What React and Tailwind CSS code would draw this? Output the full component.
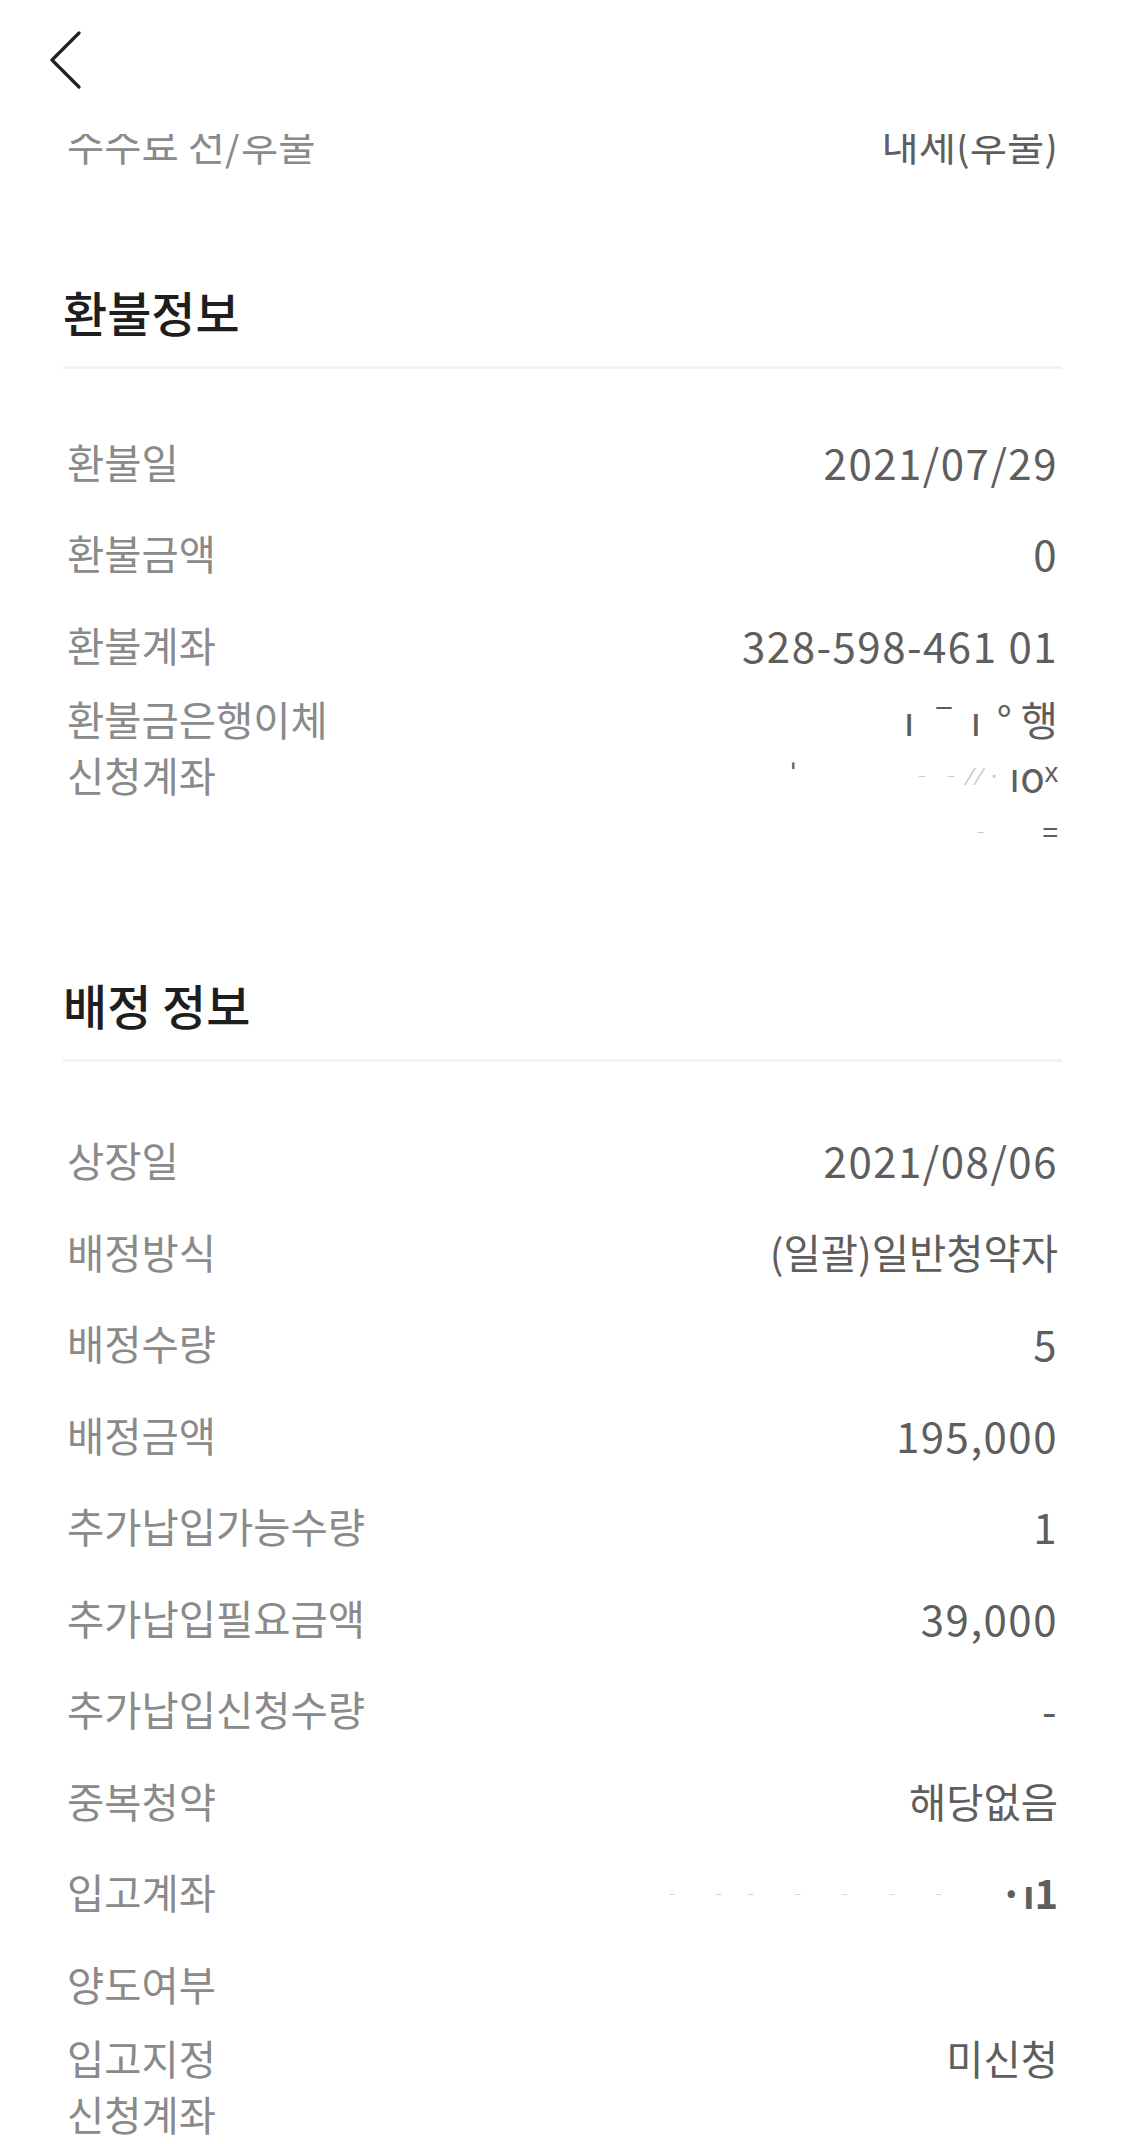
const SECTION_1 = [
  { label: "환불일", value: "2021/07/29", num: true },
  { label: "환불금액", value: "0", num: true },
  { label: "환불계좌", value: "328-598-461 01", num: true },
];

const SECTION_2 = [
  { label: "상장일", value: "2021/08/06", num: true },
  { label: "배정방식", value: "(일괄)일반청약자" },
  { label: "배정수량", value: "5", num: true },
  { label: "배정금액", value: "195,000", num: true },
  { label: "추가납입가능수량", value: "1", num: true },
  { label: "추가납입필요금액", value: "39,000", num: true },
  { label: "추가납입신청수량", value: "-", num: true },
  { label: "중복청약", value: "해당없음" },
];

const Row = ({ label, value, num }) => (
  <div className="flex min-h-[91.5px] items-center justify-between px-[4px]">
    <span className="text-[40.5px] leading-[56px] text-[#8a8a8a]">{label}</span>
    <span
      className={
        num
          ? "text-[42px] leading-[56px] tracking-[1.5px] text-[#5e5e5e]"
          : "text-[40.5px] leading-[56px] text-[#5e5e5e]"
      }
    >
      {value}
    </span>
  </div>
);

const Title = ({ children, className }) => (
  <div className={className}>
    <h2 className="text-[48px] font-medium leading-[60px] text-[#1e1e1e]">{children}</h2>
    <div className="mt-[25px] h-[3px] bg-[#f2f2f2]" />
  </div>
);

export default function App() {
  return (
    <div className="min-h-[2144px] w-[1125px] bg-white font-['Noto_Sans_CJK_KR',sans-serif]">
      {/* 상단 바 */}
      <div className="h-[132px] bg-white pl-[49px] pt-[31px]">
        <svg width="34" height="58" viewBox="0 0 34 58" fill="none">
          <polyline
            points="30,2 3,29 30,56"
            stroke="#222"
            strokeWidth="3.2"
            strokeLinecap="round"
            strokeLinejoin="round"
          />
        </svg>
      </div>

      <div className="px-[63px]">
        {/* 위로 스크롤되어 잘린 행 */}
        <div className="mt-[2px] h-[56px] overflow-hidden">
          <div className="-mt-[36px]">
            <Row label="수수료 선/후불" value="내세(후불)" />
          </div>
        </div>

        {/* 환불정보 */}
        <Title className="mt-[91px]">환불정보</Title>
        <div className="pt-[47px]">
          {SECTION_1.map((r) => (
            <Row key={r.label} {...r} />
          ))}
          <div className="flex items-start justify-between px-[4px]">
            <div className="text-[40.5px] leading-[56px] text-[#8a8a8a]">
              <div>환불금은행이체</div>
              <div>신청계좌</div>
            </div>
            <div className="text-right text-[40.5px] leading-[56px] text-[#5e5e5e]">
              <div>
                ı <span className="tracking-[6px]">ˉı</span> ° 행
              </div>
              <div className="flex items-center justify-end">
                <span className="mr-[110px]">ˈ</span>
                <span className="text-[24px] text-[#c9c9c9]">‐ ‐ ⁄ ⁄ ·</span>
                <span className="ml-[8px]">ıoˣ</span>
              </div>
              <div className="flex items-center justify-end">
                <span className="mr-[50px] text-[24px] text-[#c9c9c9]">‐</span>
                <span className="text-[28px]">=</span>
              </div>
            </div>
          </div>
        </div>

        {/* 배정 정보 */}
        <Title className="mt-[115px]">배정 정보</Title>
        <div className="pt-[53px]">
          {SECTION_2.map((r) => (
            <Row key={r.label} {...r} />
          ))}
          <div className="flex min-h-[91.5px] items-center justify-between px-[4px]">
            <span className="text-[40.5px] leading-[56px] text-[#8a8a8a]">입고계좌</span>
            <span className="flex items-center leading-[56px]">
              <span className="text-[22px] tracking-[10px] text-[#d6d6d6]">‐ ‐‐ ‐ ‐ ‐ ‐</span>
              <span className="ml-[40px] text-[40px] font-bold text-[#5e5e5e]">·ı1</span>
            </span>
          </div>
          <div className="flex min-h-[91.5px] items-center px-[4px]">
            <span className="text-[40.5px] leading-[56px] text-[#8a8a8a]">양도여부</span>
          </div>
          <div className="flex items-start justify-between px-[4px]">
            <div className="text-[40.5px] leading-[56px] text-[#8a8a8a]">
              <div>입고지정</div>
              <div>신청계좌</div>
            </div>
            <span className="text-[40.5px] leading-[56px] text-[#5e5e5e]">미신청</span>
          </div>
        </div>
      </div>
    </div>
  );
}
